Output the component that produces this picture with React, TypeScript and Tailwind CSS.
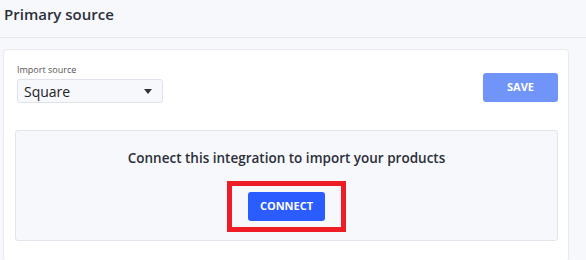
import React from 'react';

export default function App() {
  return (
    <div className="h-[260px] w-[586px] overflow-hidden bg-[#f7f8fc]" style={{ fontFamily: '"Open Sans", sans-serif' }}>
      <div className="h-[38px] border-b border-[#e6e8ee] pl-[4px] pt-[3px]">
        <h1 className="text-[15px] font-semibold text-[#2b2f38]">Primary source</h1>
      </div>
      <div className="ml-[3px] mt-[11px] w-[566px] rounded-[4px] border border-[#e8eaf0] bg-white px-[11px] pt-[14px] pb-[20px]">
        <div className="flex items-start justify-between">
          <div className="pl-[2px]">
            <div className="text-[9px] leading-[12px] text-[#555]">Import source</div>
            <button className="mt-[3px] flex h-[24px] w-[146px] items-center justify-between rounded-[3px] border border-[#dfe2ea] bg-[#f7f8fc] pl-[6px] pr-[10px] text-[14px] text-[#222]">
              <span>Square</span>
              <svg width="8" height="5" viewBox="0 0 8 5"><path d="M0 0h8L4 5z" fill="#333" /></svg>
            </button>
          </div>
          <button className="mr-[-1px] mt-[9px] h-[29px] w-[75px] rounded-[3px] bg-[#7094f8] text-[11px] font-bold text-white">SAVE</button>
        </div>
        <div className="mt-[27px] flex h-[111px] w-[543px] flex-col items-center rounded-[3px] border border-[#e3e5ec] bg-[#f7f8fc] pt-[17px]">
          <p className="text-[13.5px] leading-[20px] font-semibold text-[#2b2f38]">Connect this integration to import your products</p>
          <div className="mt-[13px] border-[5px] border-[#ee1c25] px-[16px] py-[6px]">
            <button className="block h-[29px] w-[77px] rounded-[3px] bg-[#2b5cff] text-[11px] font-bold text-white">CONNECT</button>
          </div>
        </div>
      </div>
    </div>
  );
}
